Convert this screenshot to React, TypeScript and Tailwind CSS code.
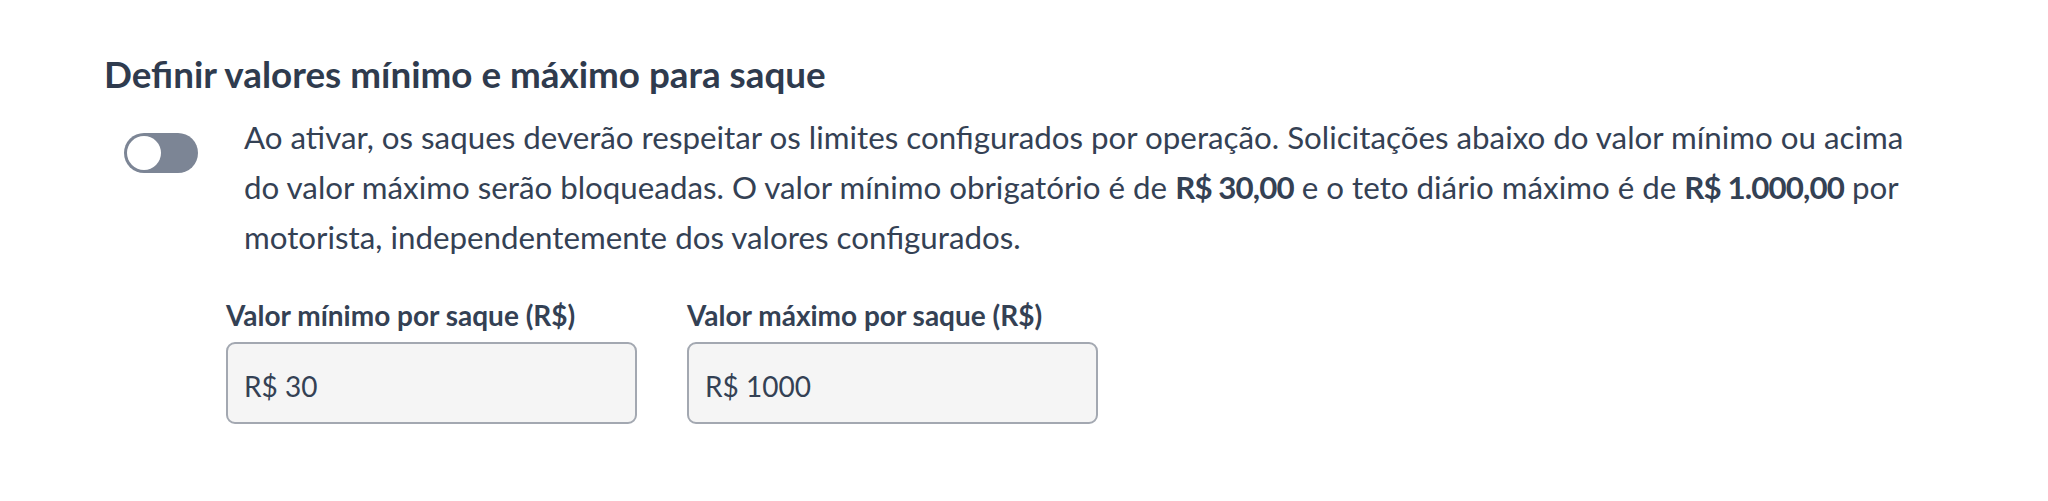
import React from "react";

export default function App() {
  return (
    <div className="w-[2048px] h-[501px] bg-white text-[#344154]" style={{ fontFamily: "Lato, 'Noto Sans', sans-serif" }}>
      <div className="pl-[104px] pt-[52px]">
        <h2 className="text-[36.8px] leading-[44px] font-bold text-[#2f3b4e]">Definir valores mínimo e máximo para saque</h2>
        <div className="flex items-start mt-[16px]">
          <div className="ml-[20px] mt-[21px] w-[74px] h-[40px] rounded-full bg-[#7c8595] p-[3px] flex items-center shrink-0">
            <div className="w-[34px] h-[34px] rounded-full bg-white" />
          </div>
          <p className="ml-[46px] text-[31.3px] leading-[50px] whitespace-nowrap">
            Ao ativar, os saques deverão respeitar os limites configurados por operação. Solicitações abaixo do valor mínimo ou acima
            <br />
            do valor máximo serão bloqueadas. O valor mínimo obrigatório é de <b className="font-bold tracking-[-0.9px]">R$ 30,00</b> e o teto diário máximo é de <b className="font-bold tracking-[-0.9px]">R$ 1.000,00</b> por
            <br />
            motorista, independentemente dos valores configurados.
          </p>
        </div>
        <div className="flex gap-[50px] ml-[122px] mt-[36px]">
          <div className="flex flex-col">
            <label className="text-[28px] leading-[34px] font-bold text-[#344154]">Valor mínimo por saque (R$)</label>
            <div className="mt-[10px] w-[411px] h-[82px] rounded-[9px] border-2 border-[#a3a8b1] bg-[#f5f5f5] flex items-center pl-[16px] pt-[6px] text-[28px]">
              R$ 30
            </div>
          </div>
          <div className="flex flex-col">
            <label className="text-[28px] leading-[34px] font-bold text-[#344154]">Valor máximo por saque (R$)</label>
            <div className="mt-[10px] w-[411px] h-[82px] rounded-[9px] border-2 border-[#a3a8b1] bg-[#f5f5f5] flex items-center pl-[16px] pt-[6px] text-[28px]">
              R$ 1000
            </div>
          </div>
        </div>
      </div>
    </div>
  );
}
